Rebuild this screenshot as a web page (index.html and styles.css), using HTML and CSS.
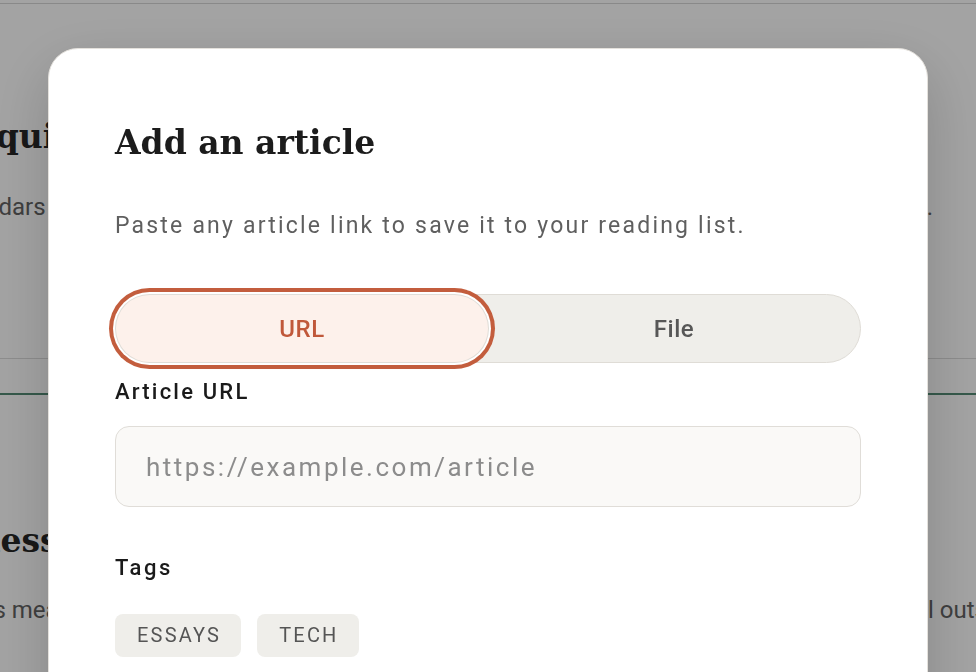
FILE: index.html
```html
<!doctype html>
<html lang="en">
<head>
	<meta charset="UTF-8">
	<meta name="viewport" content="width=device-width, initial-scale=1.0">
	<title>Add an article</title>
	<link rel="stylesheet" href="styles.css">
</head>
<body>
	<div class="page">
		<header class="topbar"></header>
		<main class="feed">
			<section class="intro">
				<h1 class="feed-title">Liquid reading</h1>
				<p class="lead"><span class="lead-start">Calendars for a slower feed</span><span>.</span></p>
			</section>
			<div class="divider"></div>
			<section class="story">
				<h2 class="feed-title">Bless the backlog</h2>
				<p class="story-text"><span>This means the queue</span><span>we pull outside</span></p>
			</section>
		</main>
	</div>

	<div class="overlay">
		<div class="modal">
			<h2 class="modal-title">Add an article</h2>
			<p class="modal-sub">Paste any article link to save it to your reading list.</p>

			<div class="seg">
				<button class="seg-btn active">URL</button>
				<button class="seg-btn">File</button>
			</div>

			<label class="field-label" for="url">Article URL</label>
			<input class="field-input" id="url" type="text" placeholder="https://example.com/article">

			<div class="field-label tags-label">Tags</div>
			<div class="tags">
				<span class="tag">Essays</span>
				<span class="tag">Tech</span>
			</div>
		</div>
	</div>
</body>
</html>
```

FILE: styles.css
```css
*,*::before,*::after{box-sizing:border-box;}
html,body{margin:0;padding:0;}
body{
	font-family:Roboto,"Liberation Sans",sans-serif;
	color:#222;
	background:#fff;
	overflow:hidden;
	height:672px;
}
h1,h2,p{margin:0;}

/* page behind the dialog */
.topbar{
	height:4px;
	border-bottom:1px solid #d6d6d6;
}
.feed{
	margin-left:-40px;
}
.feed-title{
	font-family:"DejaVu Serif",serif;
	font-weight:bold;
	font-size:33px;
	line-height:40px;
	color:#262626;
	white-space:nowrap;
}
.intro{
	padding-top:113px;
}
.lead{
	margin-top:32px;
	width:973px;
	display:flex;
	justify-content:space-between;
	font-size:24px;
	line-height:36px;
	color:#636363;
	white-space:nowrap;
}
.lead-start{
	margin-left:-22px;
}
.divider{
	margin-top:133px;
	height:37px;
	border-top:1px solid #dcdcdc;
	border-bottom:2px solid #548b75;
}
.story{
	padding-top:126px;
}
.story-text{
	margin-top:31px;
	width:1059px;
	display:flex;
	justify-content:space-between;
	font-size:24px;
	line-height:36px;
	color:#636363;
	white-space:nowrap;
}

/* dialog */
.overlay{
	position:fixed;
	top:0;left:0;right:0;bottom:0;
	background:rgba(0,0,0,.36);
	display:flex;
	justify-content:center;
	align-items:flex-start;
	padding-top:48px;
}
.modal{
	width:880px;
	min-height:700px;
	background:#fff;
	border:1px solid #e4e1dc;
	border-radius:30px;
	box-shadow:0 20px 60px rgba(0,0,0,.18);
	padding:74px 66px 40px;
}
.modal-title{
	font-family:"DejaVu Serif",serif;
	font-weight:bold;
	font-size:33px;
	line-height:40px;
	color:#1c1c1c;
}
.modal-sub{
	margin-top:46px;
	font-size:23px;
	line-height:34px;
	letter-spacing:2.2px;
	color:#5f5f5f;
}
.seg{
	margin-top:51px;
	height:69px;
	display:grid;
	grid-template-columns:1fr 1fr;
	background:#efeeea;
	border:1px solid #dfdcd6;
	border-radius:999px;
}
.seg-btn{
	border:0;
	background:transparent;
	border-radius:999px;
	font-family:inherit;
	font-size:24px;
	font-weight:500;
	letter-spacing:.5px;
	color:#575757;
	cursor:pointer;
}
.seg-btn.active{
	background:#fdf1eb;
	color:#c0583a;
	box-shadow:0 0 0 1px #e0ddd7,0 0 0 3px #fff,0 0 0 7px #c35d3d;
}
.field-label{
	display:block;
	margin-top:14px;
	font-size:22px;
	font-weight:500;
	line-height:29px;
	letter-spacing:2.2px;
	color:#1a1a1a;
}
.field-input{
	display:block;
	width:100%;
	height:81px;
	margin-top:20px;
	padding:0 30px;
	background:#faf9f7;
	border:1px solid #e0ddd8;
	border-radius:14px;
	font-family:inherit;
	font-size:26px;
	letter-spacing:2.5px;
	color:#222;
	outline:0;
}
.field-input::placeholder{
	color:#8c8c8c;
}
.tags-label{
	margin-top:46px;
	letter-spacing:2.6px;
}
.tags{
	margin-top:32px;
	display:flex;
	gap:16px;
}
.tag{
	height:43px;
	line-height:43px;
	padding:0 20px 0 22px;
	background:#efeeea;
	border-radius:8px;
	font-size:20px;
	letter-spacing:2.2px;
	text-transform:uppercase;
	color:#555;
}
```
